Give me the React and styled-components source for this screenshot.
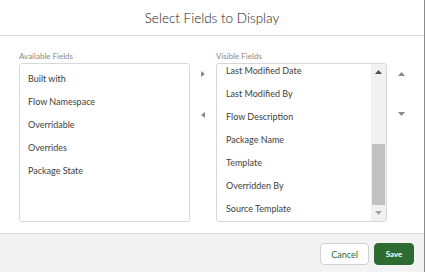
import React from "react";
import styled, { createGlobalStyle } from "styled-components";

const Global = createGlobalStyle`
  html, body { margin: 0; padding: 0; background: #fff; }
  body { font-family: Lato, "Liberation Sans", sans-serif; }
`;

const Modal = styled.div`
  width: 425px;
  height: 272px;
  box-sizing: border-box;
  border-right: 1px solid #8c8c8c;
  background: #fff;
  display: flex;
  flex-direction: column;
`;

const Header = styled.div`
  height: 36px;
  flex: none;
  box-sizing: border-box;
  border-bottom: 1px solid #dddbda;
  display: flex;
  align-items: center;
  justify-content: center;
  font-size: 13.5px;
  font-weight: 300;
  color: #181818;
`;

const Body = styled.div`
  flex: 1;
  display: flex;
  align-items: flex-start;
  padding: 15px 0 0 19px;
`;

const Column = styled.div`
  display: flex;
  flex-direction: column;
  gap: 2px;
`;

const Label = styled.div`
  font-size: 8px;
  line-height: 10px;
  color: #8a8886;
`;

const ListBox = styled.div`
  width: 171px;
  height: 159px;
  box-sizing: border-box;
  border: 1px solid #d8d8d8;
  border-radius: 3px;
  display: flex;
  overflow: hidden;
`;

const ListArea = styled.div`
  flex: 1;
  overflow: hidden;
  padding: ${(p) => p.$top}px 0 0 ${(p) => p.$left}px;
`;

const Item = styled.div`
  height: 23px;
  line-height: 23px;
  font-size: 9px;
  color: #3e3e3c;
  white-space: nowrap;
`;

const ScrollTrack = styled.div`
  width: 15px;
  flex: none;
  background: #f1f1f1;
  display: flex;
  flex-direction: column;
  align-items: center;
`;

const ScrollBtn = styled.div`
  height: 16px;
  flex: none;
  display: flex;
  align-items: center;
  justify-content: center;
`;

const ScrollSpace = styled.div`
  flex: 1;
  display: flex;
  flex-direction: column;
  justify-content: flex-end;
  align-self: stretch;
  padding: 0 1px;
`;

const Thumb = styled.div`
  height: 61px;
  background: #c1c1c1;
`;

const ArrowCol = styled.div`
  width: ${(p) => p.$w}px;
  flex: none;
  margin-top: 12px;
  padding-top: ${(p) => p.$pt}px;
  display: flex;
  flex-direction: column;
  align-items: center;
  gap: ${(p) => p.$gap}px;
`;

const Footer = styled.div`
  height: 39px;
  flex: none;
  box-sizing: border-box;
  border-top: 1px solid #dddbda;
  background: #f3f3f3;
  display: flex;
  justify-content: flex-end;
  align-items: flex-start;
  padding: 9px 10px 0 0;
  gap: 5px;
`;

const Button = styled.button`
  height: 22px;
  width: ${(p) => p.$w}px;
  box-sizing: border-box;
  border-radius: 4px;
  border: 1px solid ${(p) => (p.$brand ? "#2e6b30" : "#d0d0d0")};
  background: ${(p) => (p.$brand ? "#2e6b30" : "#fff")};
  color: ${(p) => (p.$brand ? "#fff" : "#2e6b30")};
  font-family: Lato, "Liberation Sans", sans-serif;
  font-size: ${(p) => (p.$brand ? 8 : 9)}px;
  font-weight: ${(p) => (p.$brand ? 700 : 400)};
  padding: 0;
  display: flex;
  align-items: center;
  justify-content: center;
`;

const Tri = ({ dir, w, h, color }) => {
  const pts = {
    right: `0,0 ${w},${h / 2} 0,${h}`,
    left: `${w},0 0,${h / 2} ${w},${h}`,
    up: `0,${h} ${w / 2},0 ${w},${h}`,
    down: `0,0 ${w},0 ${w / 2},${h}`,
  }[dir];
  return (
    <svg width={w} height={h} viewBox={`0 0 ${w} ${h}`} style={{ display: "block" }}>
      <polygon points={pts} fill={color} />
    </svg>
  );
};

const available = ["Built with", "Flow Namespace", "Overridable", "Overrides", "Package State"];
const visible = [
  "Last Modified Date",
  "Last Modified By",
  "Flow Description",
  "Package Name",
  "Template",
  "Overridden By",
  "Source Template",
];

export default function App() {
  return (
    <>
      <Global />
      <Modal>
        <Header>Select Fields to Display</Header>
        <Body>
          <Column>
            <Label>Available Fields</Label>
            <ListBox>
              <ListArea $top={3} $left={8}>
                {available.map((t) => (
                  <Item key={t}>{t}</Item>
                ))}
              </ListArea>
            </ListBox>
          </Column>
          <ArrowCol $w={26} $pt={8} $gap={35}>
            <Tri dir="right" w={4} h={6} color="#8a8a8a" />
            <Tri dir="left" w={4} h={6} color="#8a8a8a" />
          </ArrowCol>
          <Column>
            <Label>Visible Fields</Label>
            <ListBox>
              <ListArea $top={0} $left={9}>
                <div style={{ marginTop: -5 }}>
                  {visible.map((t) => (
                    <Item key={t}>{t}</Item>
                  ))}
                </div>
              </ListArea>
              <ScrollTrack>
                <ScrollBtn>
                  <Tri dir="up" w={7} h={4} color="#505050" />
                </ScrollBtn>
                <ScrollSpace>
                  <Thumb />
                </ScrollSpace>
                <ScrollBtn>
                  <Tri dir="down" w={7} h={4} color="#a3a3a3" />
                </ScrollBtn>
              </ScrollTrack>
            </ListBox>
          </Column>
          <ArrowCol $w={28} $pt={9} $gap={36}>
            <Tri dir="up" w={7} h={4} color="#8a8a8a" />
            <Tri dir="down" w={7} h={4} color="#8a8a8a" />
          </ArrowCol>
        </Body>
        <Footer>
          <Button $w={49}>Cancel</Button>
          <Button $w={40} $brand>
            Save
          </Button>
        </Footer>
      </Modal>
    </>
  );
}
